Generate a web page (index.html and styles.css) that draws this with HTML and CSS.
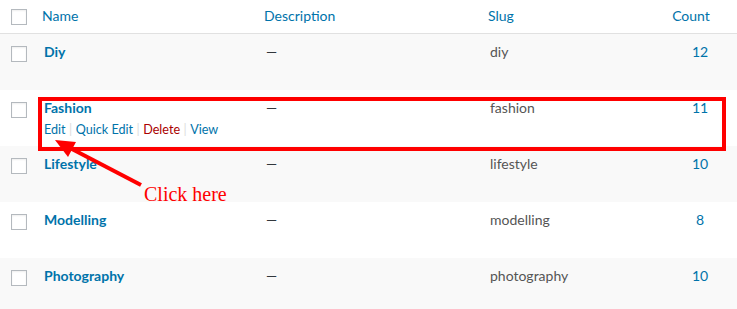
FILE: index.html
```html
<!DOCTYPE html>
<html lang="en">
<head>
<meta charset="utf-8">
<title>Categories</title>
<link rel="stylesheet" href="styles.css">
</head>
<body>
<div class="table">
  <div class="thead">
    <div class="cb"><span class="checkbox"></span></div>
    <div class="th">Name</div>
    <div class="th">Description</div>
    <div class="th">Slug</div>
    <div class="th th-count">Count</div>
  </div>
  <div class="row alt">
    <div class="cb"><span class="checkbox"></span></div>
    <div class="td name"><a>Diy</a></div>
    <div class="td desc">—</div>
    <div class="td slug">diy</div>
    <div class="td count">12</div>
  </div>
  <div class="row">
    <div class="cb"><span class="checkbox"></span></div>
    <div class="td name"><a>Fashion</a>
      <div class="row-actions"><span class="act">Edit</span><span class="sep">|</span><span class="act">Quick Edit</span><span class="sep">|</span><span class="act del">Delete</span><span class="sep">|</span><span class="act">View</span></div>
    </div>
    <div class="td desc">—</div>
    <div class="td slug">fashion</div>
    <div class="td count">11</div>
  </div>
  <div class="row alt">
    <div class="cb"><span class="checkbox"></span></div>
    <div class="td name"><a>Lifestyle</a></div>
    <div class="td desc">—</div>
    <div class="td slug">lifestyle</div>
    <div class="td count">10</div>
  </div>
  <div class="row">
    <div class="cb"><span class="checkbox"></span></div>
    <div class="td name"><a>Modelling</a></div>
    <div class="td desc">—</div>
    <div class="td slug">modelling</div>
    <div class="td count">8</div>
  </div>
  <div class="row alt">
    <div class="cb"><span class="checkbox"></span></div>
    <div class="td name"><a>Photography</a></div>
    <div class="td desc">—</div>
    <div class="td slug">photography</div>
    <div class="td count">10</div>
  </div>
</div>

<div class="highlight"></div>
<svg class="arrow" width="737" height="309" viewBox="0 0 737 309" xmlns="http://www.w3.org/2000/svg">
  <line x1="70" y1="148" x2="141" y2="185" stroke="#ff0000" stroke-width="4"/>
  <polygon points="55,140 76,142 68,157" fill="#ff0000"/>
</svg>
<div class="callout">Click here</div>
</body>
</html>
```

FILE: styles.css
```css
html, body {
  margin: 0;
  padding: 0;
}
body {
  width: 737px;
  height: 309px;
  overflow: hidden;
  position: relative;
  background: #fff;
  font-family: Lato, "Segoe UI", "Noto Sans", sans-serif;
  font-size: 14px;
  color: #32373c;
}
.thead,
.row {
  display: grid;
  grid-template-columns: 34px 222px 224px 183px 74px;
}
.thead {
  height: 33px;
  border-bottom: 1px solid #e1e1e1;
}
.th {
  padding: 6px 8px 0;
  line-height: 20px;
  color: #0073aa;
}
.th-count {
  text-align: center;
  padding: 6px 18px 0 0;
}
.cb {
  padding: 9px 0 0 11px;
}
.row .cb {
  padding-top: 12px;
}
.checkbox {
  display: block;
  width: 16px;
  height: 16px;
  box-sizing: border-box;
  border: 1px solid #b4b9be;
  background: #fff;
  box-shadow: inset 0 1px 2px rgba(0, 0, 0, 0.07);
}
.row {
  height: 56px;
}
.row.alt {
  background: #f9f9f9;
}
.td {
  padding: 8px 10px 0;
  line-height: 20px;
}
.name a {
  font-weight: bold;
  color: #0073aa;
}
.desc {
  color: #32373c;
  letter-spacing: 0;
}
.slug {
  color: #555;
}
.count {
  text-align: center;
  padding: 8px 0 0;
  color: #0073aa;
}
.row-actions {
  font-size: 12.6px;
  line-height: 19px;
  padding-top: 2px;
  white-space: nowrap;
}
.act {
  color: #0073aa;
}
.act.del {
  color: #a00;
}
.sep {
  color: #ddd;
  margin: 0 3.5px;
}
.highlight {
  position: absolute;
  left: 38px;
  top: 97px;
  width: 688px;
  height: 54px;
  box-sizing: border-box;
  border: 4px solid #ff0000;
}
.arrow {
  position: absolute;
  left: 0;
  top: 0;
  pointer-events: none;
}
.callout {
  position: absolute;
  left: 144px;
  top: 184px;
  font-family: "Liberation Serif", "Times New Roman", serif;
  font-size: 20px;
  line-height: 20px;
  color: #ff0000;
}
```
